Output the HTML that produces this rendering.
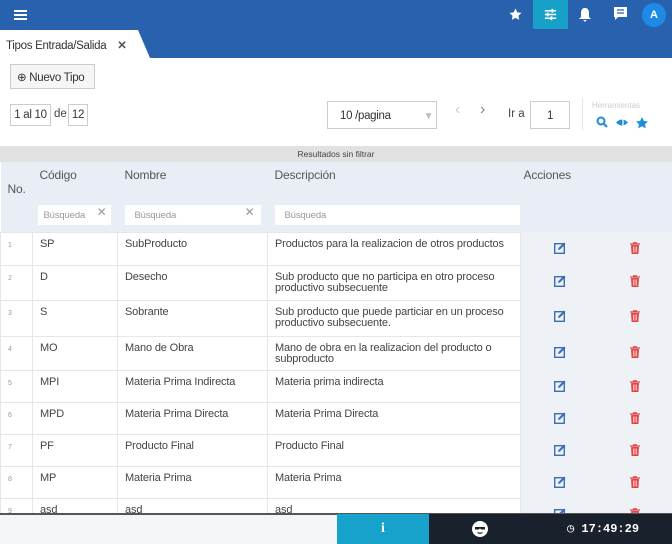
<!DOCTYPE html><html><head><meta charset="utf-8"><style>
*{box-sizing:border-box;margin:0;padding:0}
body{width:672px;height:544px;overflow:hidden;font-family:"Liberation Sans",sans-serif;background:#fff;position:relative;color:#444}
.abs{position:absolute}
.top{left:0;top:0;width:672px;height:58px;background:#2862ae}
.tab{left:0;top:30px;width:150px;height:28px;background:#fff;clip-path:polygon(0 0,138px 0,150px 28px,0 28px);font-size:11.5px;color:#333;padding:8px 0 0 6px;letter-spacing:-0.3px}
.btn{border:1px solid #ccc;background:#f6f6f6;font-size:11.5px;color:#333;letter-spacing:-0.3px}
.box{border:1px solid #ccc;background:#fff;font-size:11.5px;color:#333;text-align:center;letter-spacing:-0.3px}
table{position:absolute;left:0;top:162px;width:672px;border-collapse:collapse;font-size:11px;color:#444;table-layout:fixed;letter-spacing:-0.15px}
td{border:1px solid #e6e6e6;vertical-align:top;padding:6px 7px 3px;line-height:11.5px;overflow:hidden}
tr.h td{background:#e9eef6;border:none;color:#555;font-size:12px}
td.n{font-size:7px;color:#999;padding-top:7px}
td.a{background:#eef1f6;border:none;text-align:center;padding-top:10px}
.s{background:#fff;height:20px;font-size:9.5px;color:#999;padding:5px 10px;position:relative}
</style></head><body>
<div class="abs top"></div>
<div class="abs" style="left:14px;top:10px;width:13px;height:2px;background:#fff;box-shadow:0 4px #fff,0 8px #fff"></div>
<div class="abs" style="left:533px;top:0;width:35px;height:29px;background:#17a1c9"></div>
<svg class="abs" style="left:509px;top:8px" width="13" height="13" viewBox="0 0 24 24"><path d="M12 1l3.4 7 7.6 1-5.5 5.3 1.3 7.7L12 18.3 5.2 22l1.3-7.7L1 9l7.6-1z" fill="#fff"/></svg>
<svg class="abs" style="left:543px;top:7px" width="15" height="15" viewBox="0 0 16 16" stroke="#fff" stroke-width="1.5"><path d="M2 4h12M2 8h12M2 12h12"/><path d="M10 2v4M5 6v4M9 10v4" stroke-width="2"/></svg>
<svg class="abs" style="left:578px;top:7px" width="14" height="15" viewBox="0 0 14 15"><path d="M7 1C4 1 3 3.5 3 6v4L1 12h12l-2-2V6c0-2.5-1-5-4-5z M5.5 13a1.5 1.5 0 003 0z" fill="#fff"/></svg>
<svg class="abs" style="left:614px;top:7px" width="13" height="14" viewBox="0 0 13 14"><path d="M0 0h13v10H4l-3 3V10H0z" fill="#fff"/><path d="M3 3h7M3 6h7" stroke="#2862ae" stroke-width="1.2"/></svg>
<div class="abs" style="left:642px;top:3px;width:24px;height:24px;border-radius:50%;background:#1e8ae6;color:#fff;font-size:11px;font-weight:bold;text-align:center;line-height:24px">A</div>
<div class="abs tab">Tipos Entrada/Salida <b style="margin-left:8px;color:#555">✕</b></div>
<div class="abs btn" style="left:10px;top:64px;width:85px;height:25px;padding:5px 0 0 6px">⊕ Nuevo Tipo</div>
<div class="abs box" style="left:10px;top:104px;width:41px;height:22px;line-height:20px">1 al 10</div>
<div class="abs" style="left:54px;top:108px;font-size:11.5px">de</div>
<div class="abs box" style="left:68px;top:104px;width:20px;height:22px;line-height:20px">12</div>
<div class="abs box" style="left:327px;top:101px;width:110px;height:28px;line-height:28px;text-align:left;padding-left:12px">10 /pagina <span style="color:#bbb;margin-left:30px;font-size:10px">▼</span></div>
<div class="abs" style="left:455px;top:101px;color:#ccc;font-size:16px">‹</div>
<div class="abs" style="left:480px;top:101px;color:#888;font-size:16px">›</div>
<div class="abs" style="left:508px;top:108px;font-size:11.5px">Ir a</div>
<div class="abs box" style="left:530px;top:101px;width:40px;height:28px;line-height:28px">1</div>
<div class="abs" style="left:582px;top:98px;width:1px;height:32px;background:#e5e5e5"></div>
<div class="abs" style="left:592px;top:101px;font-size:8px;color:#ccc">Herramientas</div>
<svg class="abs" style="left:596px;top:116px" width="56" height="13" viewBox="0 0 56 13"><circle cx="5" cy="5" r="3.5" stroke="#1f8fd5" stroke-width="2" fill="none"/><path d="M7.5 7.5L11 11" stroke="#1f8fd5" stroke-width="2.2"/><path d="M20 6.5q6-6 12 0q-6 6-12 0z" fill="#1f8fd5"/><path d="M27 1v11" stroke="#fff" stroke-width="1.2"/><path d="M46 1l1.9 4 4.1.4-3 2.8.8 4.2-3.8-2.1-3.8 2.1.8-4.2-3-2.8 4.1-.4z" fill="#1f8fd5"/></svg>
<div class="abs" style="left:0;top:146px;width:672px;height:16px;background:#e1e1e1;font-size:8.5px;text-align:center;line-height:16px;color:#444">Resultados sin filtrar</div>
<table>
<colgroup><col style="width:32px"><col style="width:85px"><col style="width:150px"><col style="width:253px"><col style="width:78px"><col></colgroup>
<tr class="h" style="height:70px"><td style="padding-top:22px">No.</td>
<td><div style="margin-top:2px">Código</div><div class="s" style="margin-top:23px;margin-left:-2px;padding-left:6px">Búsqueda <span style="position:absolute;right:4px;top:2px;font-size:12px">✕</span></div></td>
<td><div style="margin-top:2px">Nombre</div><div class="s" style="margin-top:23px">Búsqueda<span style="position:absolute;right:6px;top:2px;font-size:12px">✕</span></div></td>
<td><div style="margin-top:2px">Descripción</div><div class="s" style="margin-top:23px;margin-right:-6px">Búsqueda</div></td>
<td colspan="2" style="padding-left:3px"><div style="margin-top:2px">Acciones</div></td></tr>
<tr style="height:33px"><td class="n">1</td><td>SP</td><td>SubProducto</td><td style="white-space:nowrap">Productos para la realizacion de otros productos</td><td class="a">EDIT</td><td class="a">DEL</td></tr>
<tr style="height:35px"><td class="n">2</td><td>D</td><td>Desecho</td><td>Sub producto que no participa en otro proceso productivo subsecuente</td><td class="a">EDIT</td><td class="a">DEL</td></tr>
<tr style="height:36px"><td class="n">3</td><td>S</td><td>Sobrante</td><td>Sub producto que puede particiar en un proceso productivo subsecuente.</td><td class="a">EDIT</td><td class="a">DEL</td></tr>
<tr style="height:34px"><td class="n">4</td><td>MO</td><td>Mano de Obra</td><td>Mano de obra en la realizacion del producto o subproducto</td><td class="a">EDIT</td><td class="a">DEL</td></tr>
<tr style="height:32px"><td class="n">5</td><td>MPI</td><td>Materia Prima Indirecta</td><td>Materia prima indirecta</td><td class="a">EDIT</td><td class="a">DEL</td></tr>
<tr style="height:32px"><td class="n">6</td><td>MPD</td><td>Materia Prima Directa</td><td>Materia Prima Directa</td><td class="a">EDIT</td><td class="a">DEL</td></tr>
<tr style="height:32px"><td class="n">7</td><td>PF</td><td>Producto Final</td><td>Producto Final</td><td class="a">EDIT</td><td class="a">DEL</td></tr>
<tr style="height:32px"><td class="n">8</td><td>MP</td><td>Materia Prima</td><td>Materia Prima</td><td class="a">EDIT</td><td class="a">DEL</td></tr>
<tr style="height:32px"><td class="n">9</td><td>asd</td><td>asd</td><td>asd</td><td class="a">EDIT</td><td class="a">DEL</td></tr>
</table>
<div class="abs" style="left:0;top:513px;width:672px;height:31px;background:#f4f5f7;border-top:2px solid #555"></div>
<div class="abs" style="left:337px;top:514px;width:92px;height:30px;background:#17a2cb;color:#fff;text-align:center;line-height:30px;font-weight:bold;font-size:14px;font-family:'Liberation Serif',serif">i</div>
<div class="abs" style="left:429px;top:514px;width:243px;height:30px;background:#18212c"></div>
<svg class="abs" style="left:472px;top:521px" width="16" height="16" viewBox="0 0 16 16"><circle cx="8" cy="8" r="8" fill="#fff"/><path d="M3 6h10v2.5H9.5L8 7.5 6.5 8.5H3z" fill="#18212c"/><path d="M5.5 11.5q2.5 1.5 5 0" stroke="#18212c" stroke-width="1.2" fill="none"/></svg>
<div class="abs" style="left:567px;top:514px;line-height:30px;color:#fff;font-size:12px;font-weight:bold;font-family:'Liberation Mono',monospace">◷ 17:49:29</div>
<script>
document.querySelectorAll('td.a').forEach(function(td){
 if(td.textContent=='EDIT') td.innerHTML='<svg width="12" height="12" viewBox="0 0 12 12"><rect x="0.7" y="1.7" width="9.6" height="9.6" fill="none" stroke="#3b6fb5" stroke-width="1.4"/><path d="M4 8l.5-2L10 .5l1.5 1.5L6 7.5z" fill="#3b6fb5"/></svg>';
 else td.innerHTML='<svg width="10" height="12" viewBox="0 0 10 12"><path d="M0 2h10M3.5 2V.8h3V2" stroke="#e04848" stroke-width="1.2" fill="none"/><path d="M1 3h8l-.6 9H1.6z" fill="#e04848"/><path d="M3.5 4.5v6M5 4.5v6M6.5 4.5v6" stroke="#fff" stroke-width="0.6"/></svg>';
});
</script>
</body></html>
